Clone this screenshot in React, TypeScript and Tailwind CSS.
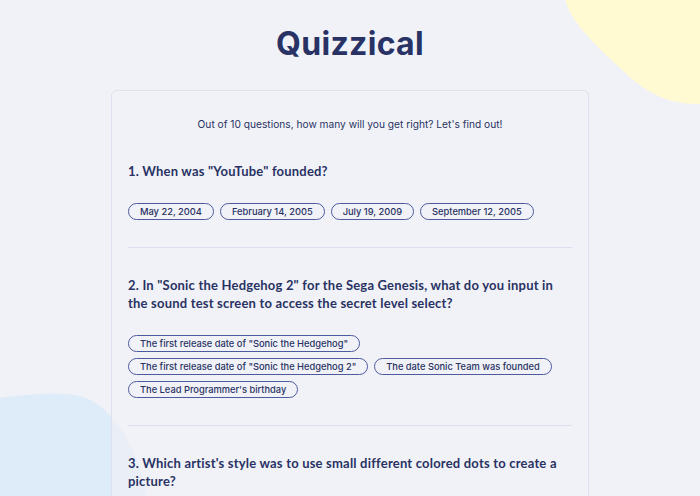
import React from "react";

const questions = [
  {
    q: '1. When was "YouTube" founded?',
    answers: [["May 22, 2004", "February 14, 2005", "July 19, 2009", "September 12, 2005"]],
  },
  {
    q: '2. In "Sonic the Hedgehog 2" for the Sega Genesis, what do you input in the sound test screen to access the secret level select?',
    answers: [
      ['The first release date of "Sonic the Hedgehog"'],
      ['The first release date of "Sonic the Hedgehog 2"', "The date Sonic Team was founded"],
      ["The Lead Programmer's birthday"],
    ],
  },
  {
    q: "3. Which artist's style was to use small different colored dots to create a picture?",
    answers: [["Georges Seurat", "Paul Cézanne", "Vincent van Gogh", "Henri Matisse"]],
  },
];

export default function App() {
  return (
    <div className="relative h-[496px] overflow-hidden bg-[#f0f2f8] font-['Inter',sans-serif] text-[#293264]">
      {/* Blobs */}
      <svg className="absolute top-0 right-0" width="140" height="110" viewBox="0 0 140 110">
        <path d="M5 0 C12 22 30 40 60 68 C85 92 105 104 140 104 L140 0 Z" fill="#fffad1" />
      </svg>
      <svg className="absolute left-0 bottom-0" width="150" height="110" viewBox="0 0 150 110">
        <path d="M0 12 C30 8 60 6 80 10 C110 18 135 55 146 106 L146 110 L0 110 Z" fill="#deebf8" />
      </svg>

      <div className="relative flex flex-col items-center">
        <h1 className="mt-[25px] text-[32px] leading-[38px] font-bold tracking-[0.3px]">
          Quizzical
        </h1>

        <div className="mt-[27px] w-[478px] rounded-[6px] border border-[#dde0ee] bg-[#f1f2f7]/60 px-[16px] pt-[26px]">
          <p className="text-center text-[10.2px] leading-[14px]">
            Out of 10 questions, how many will you get right? Let's find out!
          </p>

          {questions.map((item, i) => (
            <div key={i} className={i === 0 ? "mt-[31px]" : "mt-[28px]"}>
              <h2 className="pr-[3px] font-['Lato',sans-serif] text-[13px] leading-[18px] font-bold tracking-[0.2px]">
                {item.q}
              </h2>
              <div className="mt-[23px] flex flex-col gap-[6px]">
                {item.answers.map((row, r) => (
                  <div key={r} className="flex gap-[6px]">
                    {row.map((a) => (
                      <span
                        key={a}
                        className="h-[17px] whitespace-nowrap rounded-full border border-[#4d5b9e] px-[11px] text-[9.3px] leading-[15px] font-medium"
                      >
                        {a}
                      </span>
                    ))}
                  </div>
                ))}
              </div>
              <div className="mt-[27px] border-b border-[#dbdef0]" />
            </div>
          ))}
        </div>
      </div>
    </div>
  );
}
